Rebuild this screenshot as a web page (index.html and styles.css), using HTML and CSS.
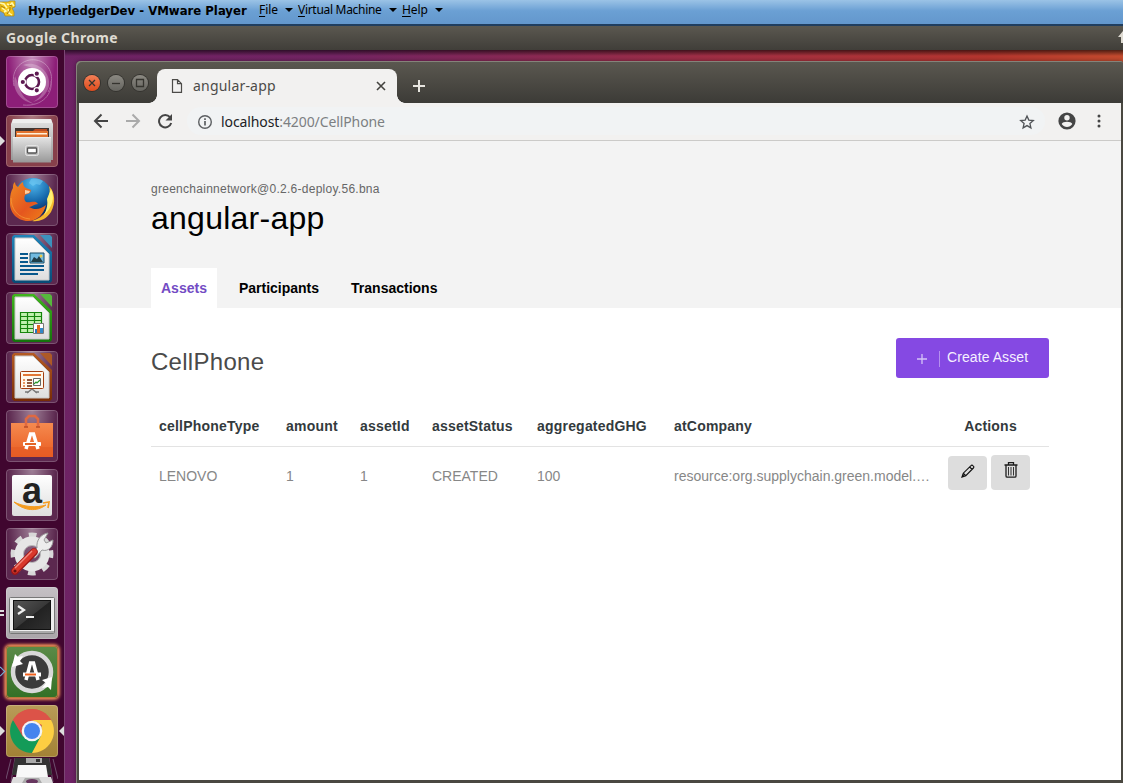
FILE: index.html
```html
<!DOCTYPE html>
<html lang="en">
<head>
<meta charset="utf-8">
<title>angular-app</title>
<link rel="stylesheet" href="styles.css">
</head>
<body>
<svg class="defs" width="0" height="0">
  <defs>
    <linearGradient id="metal" x1="0" y1="0" x2="0" y2="1"><stop offset="0" stop-color="#e4e4e4"/><stop offset="1" stop-color="#989898"/></linearGradient>
    <linearGradient id="paper" x1="0" y1="0" x2="0" y2="1"><stop offset="0" stop-color="#fff"/><stop offset="1" stop-color="#dedede"/></linearGradient>
    <linearGradient id="blue" x1="0" y1="0" x2="0" y2="1"><stop offset="0" stop-color="#2184b9"/><stop offset="1" stop-color="#074b77"/></linearGradient>
    <linearGradient id="green" x1="0" y1="0" x2="0" y2="1"><stop offset="0" stop-color="#40b51d"/><stop offset="1" stop-color="#14720c"/></linearGradient>
    <linearGradient id="brown" x1="0" y1="0" x2="0" y2="1"><stop offset="0" stop-color="#b55a23"/><stop offset="1" stop-color="#782c06"/></linearGradient>
    <linearGradient id="bag" x1="0" y1="0" x2="0" y2="1"><stop offset="0" stop-color="#f58a4f"/><stop offset="1" stop-color="#e95c21"/></linearGradient>
    <linearGradient id="fox" x1="0" y1="0" x2="1" y2="1"><stop offset="0" stop-color="#f08a22"/><stop offset=".55" stop-color="#e4561f"/><stop offset="1" stop-color="#f08018"/></linearGradient>
    <radialGradient id="globe" cx=".5" cy=".15" r=".75"><stop offset="0" stop-color="#4fb8ee"/><stop offset=".6" stop-color="#1668ab"/><stop offset="1" stop-color="#0c2f66"/></radialGradient>
    <linearGradient id="screen" x1="0" y1="0" x2="1" y2="1"><stop offset="0" stop-color="#555"/><stop offset=".5" stop-color="#383838"/><stop offset=".52" stop-color="#222"/><stop offset="1" stop-color="#303030"/></linearGradient>
  </defs>
</svg>
<div class="vm-bar">
  <svg class="vm-logo" viewBox="0 0 17 18" width="17" height="18"><path d="M0 2h8l2-1h5v6l-3 1 2 4v4H5l-1-3-4-2Z" fill="#f3c51a" stroke="#ad8616" stroke-width=".7"/><path d="M0 3l4 1 3 4m0-4 3 1 2-2 2 3m-12 2 4 3-2 1m4-3 1 4 3 2" fill="none" stroke="#fff8b0" stroke-width="1.5"/><path d="m1 6 4 2m5-1v3l-3 4m5-8-3-1" stroke="#a87c0c" fill="none"/></svg>
  <span class="vm-title">HyperledgerDev - VMware Player</span>
  <span class="menu m-file"><u>F</u>ile</span><i class="caret"></i>
  <span class="menu m-vm"><u>V</u>irtual Machine</span><i class="caret"></i>
  <span class="menu m-help"><u>H</u>elp</span><i class="caret"></i>
</div>
<div class="panel"><span>Google Chrome</span><svg viewBox="0 0 5 14" width="5" height="14"><path d="M5 0 0 6h3v6h2Z" fill="#dfdbd2"/></svg></div>
<div class="desktop">
  <nav class="launcher">
    <div class="tile t-dash"><svg viewBox="0 0 52 52"><g fill="none" stroke="#fff" stroke-width="1" opacity=".3"><path d="M8 30C4 12 18 2 30 4c14 2 20 18 12 32"/><path d="M17 49c20 2 30-12 28-24"/></g><path d="M17 9C30 4 45 15 43 30c-2 8-8 14-16 16 18-10 14-32-10-37Z" fill="#fff" opacity=".25"/><path d="M9 20c-4 14 6 26 20 28-8-3-14-8-16-18Z" fill="#fff" opacity=".25"/><circle cx="26" cy="26" r="14" fill="#fff"/><circle cx="26" cy="26" r="7" fill="none" stroke="#5c1850" stroke-width="2.6"/><g stroke="#fff" stroke-width="1.2" fill="#5c1850"><circle cx="16.800" cy="26" r="2.700"/><circle cx="30.800" cy="17.700" r="2.700"/><circle cx="30.800" cy="34.300" r="2.700"/></g></svg></div>
    <div class="tile t-files"><i class="pip"></i><svg viewBox="0 0 52 52"><path d="M7 4h38l2 5v36H5V9Z" fill="url(#metal)"/><path d="M7 4h38l1 4H6Z" fill="#eee"/><path d="M9 13h34v10H9Z" fill="#413632"/><path d="M10 16h32v7H10Z" fill="#e2732f"/><path d="M10 16h17l2-2h12v2Z" fill="#b94b23"/><path d="M11 18h30v1.500H11Z" fill="#fff0da"/><path d="M7 22h38v25.500H7Z" fill="url(#metal)"/><path d="M7 22h38v1H7Z" fill="#ededed"/><rect x="19.500" y="30.500" width="13" height="10" rx="2" fill="#bdbdbd" stroke="#e5e5e5"/><rect x="21.500" y="33" width="9" height="5" rx=".8" fill="#fff" stroke="#555" stroke-width="1.300"/></svg></div>
    <div class="tile"><svg viewBox="0 0 52 52"><circle cx="27" cy="23.500" r="19.500" fill="url(#globe)"/><path d="M25 5c5-1 9 0 12 2l-3 4-4-1-3 2-4-3Z" fill="#75caf1" opacity=".6"/><path d="M43 12c6 6 7 17 2 26-5 8-13 10-19 9 13-4 18-13 16-22 2-4 2-9 1-13Z" fill="#f6b92e"/><path d="M45 15c4 8 2 18-7 26 3-6 4-11 3-16Z" fill="#fff075"/><path d="M9 8c0 2 1 4 3 5 2-3 3-4 5-5 0 3 1 5 3 6l5 2-1 3-5 2c-1 3-1 5 1 7 4 1 6-1 10 0l2 2c-4 0-6 3-9 3 5 3 11 3 17-2-2 9-9 16-18 16C11 47 3 38 4 27c0-6 1-10 3-13 0-3 0-4 2-6Z" fill="url(#fox)"/><path d="m19 16 5 1-1 2-4 1Z" fill="#fbd0a0"/><path d="M5 24c0 10 6 20 19 21" fill="none" stroke="#f6a03a" opacity=".7"/></svg></div>
    <div class="tile"><svg viewBox="0 0 52 52"><path d="M8 2h20l18 17v29l-2 2H8l-2-2V4Z" fill="url(#blue)"/><path d="M34 2h10l2 2v11Z" fill="#3c91bd"/><path d="M9 5h18l16 16v26H9Z" fill="url(#paper)" stroke="#c8c8c8"/><path d="M14 21h8M14 25h8M14 29h8M14 33h24M14 37h24M14 41h18" stroke="#07588d" stroke-width="2"/><path d="M24 20h14v10H24Z" fill="#71bae0" stroke="#174c68"/><path d="m25 29 3-5 3 2 2-3 4 6Z" fill="#203e48"/><circle cx="35" cy="23" r="1.500" fill="#e8c84a"/></svg></div>
    <div class="tile"><svg viewBox="0 0 52 52"><path d="M8 2h20l18 17v29l-2 2H8l-2-2V4Z" fill="url(#green)"/><path d="M34 2h10l2 2v11Z" fill="#56b83c"/><path d="M9 5h18l16 16v26H9Z" fill="url(#paper)" stroke="#c8c8c8"/><path d="M14.500 20.500h21v20h-21Zm0 4h21m-21 4h21m-21 4h21m-21 4h21m-14-16v20m7-20v20" fill="#c0f1ae" stroke="#16850d" stroke-width="1.200"/><path d="M27.500 31.500h10v10h-10Z" fill="#fff" stroke="#777"/><path d="M29 37h2v4h-2Z" fill="#2679be"/><path d="M31 33h3v8h-3Z" fill="#e46b20"/><path d="M34 36h3v5h-3Z" fill="#3188c8"/></svg></div>
    <div class="tile"><svg viewBox="0 0 52 52"><path d="M8 2h20l18 17v29l-2 2H8l-2-2V4Z" fill="url(#brown)"/><path d="M34 2h10l2 2v11Z" fill="#ad5926"/><path d="M9 5h18l16 16v26H9Z" fill="url(#paper)" stroke="#c8c8c8"/><path d="m21 42 5-4 5 4M19 41h4m6 0h4" stroke="#777" stroke-width="1.500" fill="none"/><rect x="14.500" y="20.500" width="23" height="17" rx="1" fill="#fff9ed" stroke="#a23e10"/><path d="M17 24h18" stroke="#e27735" stroke-width="2"/><path d="M17 29h2m-2 3h2m-2 3h2" stroke="#e27735" stroke-width="1.700"/><path d="M21 29h5m-5 3h5m-5 3h5" stroke="#702706" stroke-width="1.700"/><path d="M27.500 27.500h7v7h-7Z" fill="#fff" stroke="#666"/><path d="m28 33 2-2 1 1 3-3" fill="none" stroke="#2b962c" stroke-width="1.200"/></svg></div>
    <div class="tile"><svg viewBox="0 0 52 52"><path d="M5 13h42v34H5Z" fill="url(#bag)"/><path d="M5 37h42v10H5Z" fill="#e55b25" opacity=".6"/><path d="M20 17V9l3-3h6l3 3v8" fill="none" stroke="#df6942" stroke-width="2.500"/><path d="M18 17h4m8 0h4" stroke="#bb4c26" stroke-width="1.500"/><path d="m20 39 4.500-15h3l4.500 15" fill="none" stroke="#fff" stroke-width="3.500"/><path d="M17.500 32.500h17v3h-17Z" fill="#fff" stroke="#fff" stroke-linejoin="round"/><path d="M19 34h11" stroke="#e36528" stroke-width="2"/></svg></div>
    <div class="tile"><svg viewBox="0 0 52 52"><rect x="6" y="6" width="40" height="41" rx="2" fill="url(#paper)"/><text x="26" y="33.500" class="amazon-a" text-anchor="middle">a</text><path d="M8 33c10 9 23 10 32 3-10 3-22 2-32-3Z" fill="#f59c20" stroke="#f59c20"/><path d="m37 34 6-1-1 6" fill="none" stroke="#f59c20" stroke-width="1.700"/></svg></div>
    <div class="tile"><svg viewBox="0 0 52 52"><circle cx="26" cy="26" r="19" fill="none" stroke="#d8d8d8" stroke-width="5" stroke-dasharray="7.460 7.460" transform="rotate(-11 26 26)"/><circle cx="26" cy="26" r="13" fill="none" stroke="#e6e6e6" stroke-width="9"/><circle cx="26" cy="26" r="8.500" fill="none" stroke="#b9b9b9"/><path d="m24 27 7-7c-1-8 4-14 11-15l-4 7 2 3 7-3c0 7-5 12-11 10l-7 8Z" fill="#ededed" stroke="#999"/><path d="M9 43 28 24" stroke="#9f1717" stroke-width="7.500" stroke-linecap="round"/><path d="M9 42.500 28 23.500" stroke="#d9382b" stroke-width="5.500" stroke-linecap="round"/><path d="M9 40 26 23" stroke="#f18c80" stroke-width="1.200"/><circle cx="9" cy="43" r="1.600" fill="#641010"/></svg></div>
    <div class="tile t-term"><i class="pip-bar bar-up"></i><i class="pip-bar bar-down"></i><svg viewBox="0 0 52 52"><rect x="3.500" y="10.500" width="45" height="36" rx="1" fill="#eee" stroke="#777"/><path d="M4 44h44v2H4Z" fill="#aaa"/><rect x="7.500" y="13.500" width="37" height="29" fill="url(#screen)" stroke="#111"/><path d="m12 19 6 4-6 4m8 3h8" fill="none" stroke="#eee" stroke-width="2.200"/></svg></div>
    <div class="tile t-update"><i class="pip pip-open"></i><svg viewBox="0 0 52 52"><circle cx="26" cy="26" r="19" fill="#3b3b3b" stroke="#d8d8d8" stroke-width="4.500"/><path d="m6 21 3-13 3 3 5-1-3 5 3 3Z" fill="#fff"/><path d="m46 31-1 13-3-3-6 1 4-5-4-3Z" fill="#fff"/><path d="m20 34 4.500-17h3L32 34" fill="none" stroke="#fff" stroke-width="3.500"/><path d="M17 26.500h18v4H17Z" fill="#fff"/><path d="M19 28.500h11" stroke="#ef601d" stroke-width="2"/></svg></div>
    <div class="tile t-chrome"><i class="pip"></i><i class="pip pip-right"></i><svg viewBox="0 0 52 52"><path d="M26 26 7 15a22 22 0 0 1 38 0Z" fill="#dc5348"/><path d="M7 15A22 22 0 0 0 26 48L35 31 26 36Z" fill="#149b58"/><path d="M45 15A22 22 0 0 1 26 48L35 31 36 20 26 15Z" fill="#fdce42"/><path d="M7 15A22 22 0 0 1 45 15H26Z" fill="#dc5348"/><path d="m7 15 10 17 9-17Z" fill="#dc5348"/><circle cx="26" cy="26" r="10.300" fill="#f4f4f4"/><circle cx="26" cy="26" r="8" fill="#4484ee"/></svg></div>
    <div class="disks"><svg viewBox="0 0 52 25" width="52" height="25"><path d="M5 1 0 21m47-20 5 20M9 0 5 24M43 0l4 24" stroke="#83708a" opacity=".7"/><path d="M9 0h34l3 17H6Z" fill="#333"/><path d="M20 0h16v5H20Z" fill="#aaa"/><path d="M30 1h4v3h-4Z" fill="#333"/><path d="M12 7h28l2 12H10Z" fill="#f8f8f8"/><path d="M7 19h38l2 6H5Z" fill="#ddd"/><path d="M19 20h14l3 5H16Z" fill="#aaa"/><ellipse cx="26" cy="23.500" rx="6" ry="2.500" fill="#67365f"/></svg></div>
  </nav>
  <main class="workspace">
    <div class="window">
      <div class="tabstrip">
        <div class="controls">
          <span class="ctl close"><svg viewBox="0 0 16 16"><path d="m5 5 6 6m0-6-6 6"/></svg></span>
          <span class="ctl"><svg viewBox="0 0 16 16"><path d="M4 8.500h8"/></svg></span>
          <span class="ctl"><svg viewBox="0 0 16 16"><path d="M4.500 4.500h7v7h-7Z"/></svg></span>
        </div>
        <div class="tab">
          <svg viewBox="0 0 12 14" width="12" height="14"><path d="M1.500.700h5l4 4v8.600h-9Zm5 0v4h4" fill="none" stroke="#4c4b48" stroke-width="1.200"/></svg>
          <span class="tab-title">angular-app</span>
          <svg viewBox="0 0 10 10" width="10" height="10"><path d="m1 1 8 8m0-8L1 9" stroke="#44433f" stroke-width="1.600"/></svg>
        </div>
        <svg class="newtab" viewBox="0 0 12 12" width="12" height="12"><path d="M6 0v12M0 6h12" stroke="#e7e5df" stroke-width="2"/></svg>
      </div>
      <div class="toolbar">
        <svg class="nav" viewBox="0 0 16 16" width="16" height="16"><path d="M15 8H2m6.500-6.500L2 8l6.500 6.500" fill="none" stroke="#454545" stroke-width="2"/></svg>
        <svg class="nav" viewBox="0 0 16 16" width="16" height="16"><path d="M1 8h13M7.500 1.500 14 8l-6.500 6.500" fill="none" stroke="#aaa" stroke-width="2"/></svg>
        <svg class="nav" viewBox="0 0 16 16" width="16" height="16"><path d="M13 4.200A6.200 6.200 0 1 0 14.200 10" fill="none" stroke="#454545" stroke-width="2"/><path d="M15 1v6.500H8.500Z" fill="#454545"/></svg>
        <div class="omnibox">
          <svg class="info" viewBox="0 0 16 16" width="16" height="16"><circle cx="8" cy="8" r="6.300" fill="none" stroke="#5c5f62" stroke-width="1.400"/><path d="M8 7v4.500M8 4.200v1.700" stroke="#5c5f62" stroke-width="1.700"/></svg>
          <span class="url"><b>localhost</b>:4200/CellPhone</span>
          <svg class="star" viewBox="0 0 16 16" width="16" height="16"><path d="m8 2 1.800 4.100 4.500.400-3.400 3 1 4.400L8 11.600l-3.900 2.300 1-4.400-3.400-3 4.500-.400Z" fill="none" stroke="#505357" stroke-width="1.300"/></svg>
        </div>
        <svg class="user" viewBox="0 0 18 18" width="18" height="18"><circle cx="9" cy="9" r="8.600" fill="#454545"/><circle cx="9" cy="5.800" r="2.700" fill="#f2f1f0"/><path d="M3.700 12c1-3 9.600-3 10.600 0-2.500 4-8.100 4-10.600 0Z" fill="#f2f1f0"/></svg>
        <svg class="dots" viewBox="0 0 4 14" width="4" height="14"><g fill="#454545"><circle cx="2" cy="2" r="1.500"/><circle cx="2" cy="7" r="1.500"/><circle cx="2" cy="12" r="1.500"/></g></svg>
      </div>
      <section class="page">
        <header class="hero">
          <p class="network">greenchainnetwork@0.2.6-deploy.56.bna</p>
          <h1>angular-app</h1>
          <nav class="tabs"><a class="active">Assets</a><a>Participants</a><a>Transactions</a></nav>
        </header>
        <div class="content">
          <div class="heading">
            <h2>CellPhone</h2>
            <button class="create"><svg viewBox="0 0 10 10" width="10" height="10"><path d="M5 0v10M0 5h10" stroke="#d5c4f7" stroke-width="1.300"/></svg><i></i><span>Create Asset</span></button>
          </div>
          <table>
            <colgroup><col class="c1"><col class="c2"><col class="c3"><col class="c4"><col class="c5"><col class="c6"><col class="c7"></colgroup>
            <thead><tr><th>cellPhoneType</th><th>amount</th><th>assetId</th><th>assetStatus</th><th>aggregatedGHG</th><th>atCompany</th><th class="actions-head">Actions</th></tr></thead>
            <tbody><tr><td>LENOVO</td><td>1</td><td>1</td><td>CREATED</td><td>100</td><td class="company">resource:org.supplychain.green.model.…</td>
              <td class="actions"><div class="buttons">
                <button class="edit"><svg viewBox="0 0 14 14" width="14" height="14"><path d="M1 13 2.300 9.200 10 1.600a1.300 1.300 0 0 1 1.900 0l.5.500a1.300 1.300 0 0 1 0 1.900L4.800 11.700ZM8.700 3l2.300 2.300M2.500 9.500l2 2" fill="none" stroke="#111" stroke-width="1.150"/><path d="m1 13 .8-2.600L3.600 12Z" fill="#111"/></svg></button>
                <button class="trash"><svg viewBox="0 0 14 16" width="14" height="16"><path d="M.5 3h13M4.500 2.500V.700h5v1.800M2 3v11q0 1.200 1.200 1.200h7.600q1.200 0 1.200-1.200V3" fill="none" stroke="#1c1c1c" stroke-width="1.300"/><path d="M4.500 5v8.500M7 5v8.500M9.500 5v8.500" stroke="#333" stroke-width="1"/></svg></button>
              </div></td></tr></tbody>
          </table>
        </div>
      </section>
    </div>
  </main>
</div>
</body>
</html>
```
FILE: styles.css
```css
* { box-sizing: border-box; }
body { margin: 0; width: 1123px; height: 783px; overflow: hidden; display: flex; flex-direction: column; font-family: "Liberation Sans", Arial, sans-serif; }
.defs { position: absolute; }
button { border: 0; padding: 0; font: inherit; }
svg { flex: none; display: block; }

.vm-bar { flex: none; height: 26px; display: flex; align-items: flex-start; background: linear-gradient(#9bc3e6, #6ba0d4 45%, #6397cc); border-bottom: 2px solid #203e5f; font-family: "Noto Sans", sans-serif; font-size: 12px; line-height: 20px; color: #000; white-space: nowrap; }
.vm-logo { margin-right: 11px; }
.vm-title { width: 231px; font: bold 13px/21px "DejaVu Sans Condensed", "DejaVu Sans", sans-serif; font-stretch: condensed; }
.menu { letter-spacing: -.1px; }
.menu u { text-underline-offset: 2px; }
.m-file { width: 26px; }
.m-vm { width: 91px; letter-spacing: -.3px; }
.m-help { width: 33px; }
.caret { width: 0; height: 0; border: 4px solid transparent; border-top-color: #000; border-bottom: 0; margin-top: 8px; }
.m-file + .caret { margin-right: 5px; }
.m-vm + .caret { margin-right: 5px; }

.panel { flex: none; height: 24px; display: flex; align-items: center; justify-content: space-between; padding-left: 6px; background: linear-gradient(#5b5850, #403e39); color: #dfdbd2; font: bold 14px/24px "Noto Sans", sans-serif; letter-spacing: .35px; }
.desktop { flex: 1; min-height: 0; display: flex; background: linear-gradient(rgba(0,0,0,.6), transparent 6px), linear-gradient(90deg, #6d2265, #732463 30%, #a22f43 65%, #b5362e 88%, #c34b2e); }

.launcher { flex: none; width: 65px; padding: 6px 0 0 6px; display: flex; flex-direction: column; gap: 7px; overflow: hidden; background: #40062f; border-right: 1px solid #7b4674; }
.tile { position: relative; flex: none; width: 52px; height: 52px; border-radius: 4px; background: radial-gradient(ellipse at 50% 0, rgba(255,255,255,.45), rgba(255,255,255,.08) 65%), #4e1640; box-shadow: inset 0 0 0 1px rgba(255,255,255,.2); }
.t-dash { background: radial-gradient(ellipse at 50% 0, rgba(255,255,255,.5), transparent 65%), #8d1e78; }
.t-files { background: radial-gradient(ellipse at 50% 0, rgba(255,255,255,.3), transparent 65%), #87404b; }
.t-term { background: linear-gradient(#c4c0c4, #aaa5a9); }
.t-update { background: linear-gradient(#5b8b48, #337026); box-shadow: 0 0 3px 2px #e98a59, inset 0 0 0 1px #b9793c; }
.t-chrome { background: linear-gradient(#b99b58, #a28135); }
.pip { position: absolute; left: -6px; top: 21px; border: 5px solid transparent; border-left-color: #ddd; border-right: 0; }
.pip-bar { position: absolute; left: -6px; width: 4px; height: 2px; background: #ddd; }
.bar-up { top: 23px; }
.bar-down { top: 27px; }
.pip-right { left: 53px; border: 5px solid transparent; border-right-color: #ddd; border-left: 0; }
.pip-open { left: -9px; top: 22px; width: 7px; height: 7px; border: 1px solid #72b5dc; border-left: 0; border-bottom: 0; transform: rotate(45deg); }
.disks { flex: none; margin-top: -6px; }
.amazon-a { font: bold 36px "Liberation Sans", sans-serif; fill: #222; }

.workspace { flex: 1; min-width: 0; padding: 11px 0 0 11px; display: flex; }
.window { flex: 1; min-width: 0; display: flex; flex-direction: column; padding: 0 2px 3px 3px; background: #4a4841; border-radius: 5px 3px 0 0; box-shadow: inset 1px 1px #85837a, 0 0 4px rgba(0,0,0,.4); }
.tabstrip { flex: none; height: 42px; margin: 0 -2px 0 -3px; padding: 8px 0 0 8px; display: flex; align-items: flex-start; background: linear-gradient(#5b5850, #3c3b37); border-radius: 5px 3px 0 0; box-shadow: inset 1px 1px #85837a; }
.controls { display: flex; gap: 8px; padding-top: 6px; width: 73px; }
.ctl { width: 16px; height: 16px; border-radius: 50%; background: linear-gradient(#8b8982, #65645f); box-shadow: 0 0 0 1px #34332f; }
.ctl.close { background: linear-gradient(#f37f56, #df4b1c); }
.ctl path { fill: none; stroke: #35342f; stroke-width: 1.300; }
.tab { position: relative; width: 240px; height: 34px; display: flex; align-items: center; padding: 0 11px 0 14px; background: #f2f1f0; border-radius: 8px 8px 0 0; }
.tab::before, .tab::after { content: ""; position: absolute; bottom: 0; width: 8px; height: 8px; }
.tab::before { left: -8px; background: radial-gradient(circle at 0 0, transparent 7.500px, #f2f1f0 8px); }
.tab::after { right: -8px; background: radial-gradient(circle at 100% 0, transparent 7.500px, #f2f1f0 8px); }
.tab-title { flex: 1; padding-left: 10px; font: 14px/20px "Noto Sans", sans-serif; letter-spacing: .2px; color: #4c4b48; }
.newtab { margin: 11px 0 0 16px; }
.toolbar { flex: none; height: 38px; display: flex; align-items: center; padding: 0 20px 1px 14px; background: #f2f1f0; border-bottom: 1px solid #cbcac8; }
.nav { margin-right: 16px; }
.omnibox { flex: 1; height: 28px; display: flex; align-items: center; margin-right: 13px; margin-left: -2px; padding: 1px 10px 0 10px; border-radius: 14px; background: #f1f3f4; }
.url { flex: 1; padding: 1px 0 0 8px; font: 14px/20px "Noto Sans", sans-serif; letter-spacing: -.1px; color: #7c7f82; }
.url b { font-weight: normal; color: #202124; }
.dots { margin-left: 21px; }

.page { flex: 1; min-height: 0; background: #fff; }
.hero { height: 167px; padding: 40px 72px 0; background: #f3f3f3; display: flex; flex-direction: column; }
.network { margin: 0; font-size: 12px; line-height: 16px; letter-spacing: .27px; color: #666; }
h1 { margin: 2px 0 0; font-size: 32px; font-weight: normal; line-height: 38px; color: #000; letter-spacing: .25px; }
.tabs { margin-top: auto; display: flex; gap: 12px; font-size: 14px; font-weight: bold; line-height: 40px; color: #000; }
.tabs a { padding: 0 10px; }
.tabs .active { background: #fff; color: #734bc4; }
.content { padding: 30px 72px 0; }
.heading { height: 40px; display: flex; justify-content: space-between; }
h2 { margin: 0; font-size: 24px; font-weight: normal; line-height: 48px; color: #4a4a4a; letter-spacing: .28px; }
.create { width: 153px; height: 40px; display: flex; align-items: center; padding-left: 21px; border-radius: 3px; background: #8549e3; color: #f6f0ff; font-size: 14px; letter-spacing: .08px; }
.create svg { margin-top: 2px; }
.create span { margin-top: -2px; }
.create i { width: 1px; height: 16px; margin: 2px 7px 0 12px; background: #b590ef; }
table { width: 898px; margin-top: 28px; table-layout: fixed; border-collapse: collapse; font-size: 14px; line-height: 20px; text-align: left; }
.c1 { width: 127px; } .c2 { width: 74px; } .c3 { width: 72px; } .c4 { width: 105px; } .c5 { width: 137px; } .c6 { width: 266px; } .c7 { width: 117px; }
th { height: 40px; padding: 1px 0 0 8px; color: #333a3d; border-bottom: 1px solid #e3e3e3; letter-spacing: .2px; }
td { height: 60px; padding: 0 0 0 8px; color: #878787; }
.company { white-space: nowrap; }
.actions-head { padding: 1px 0 0; text-align: center; }
.actions { padding: 0; vertical-align: top; }
.buttons { display: flex; align-items: flex-end; gap: 4px; padding: 8px 0 0 16px; }
.buttons button { width: 39px; height: 34px; display: flex; align-items: center; justify-content: center; border-radius: 4px; background: #ddd; }
.buttons .edit { padding-bottom: 3px; }
.buttons .trash { height: 35px; padding-bottom: 4px; }
```
